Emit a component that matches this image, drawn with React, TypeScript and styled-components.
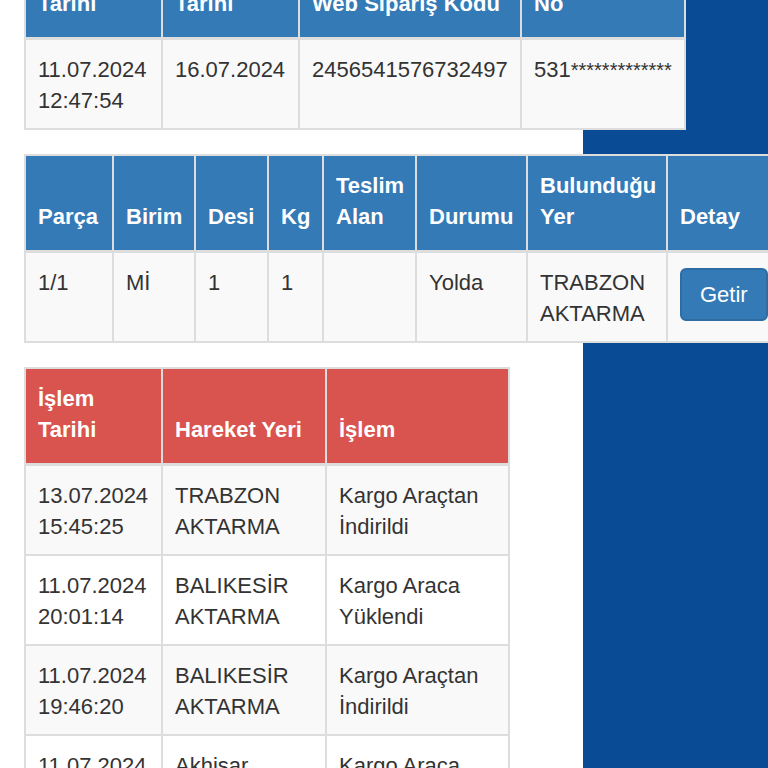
import React from "react";
import styled, { createGlobalStyle } from "styled-components";

const Global = createGlobalStyle`
  html, body {
    margin: 0;
    padding: 0;
    height: 100%;
    overflow: hidden;
  }
  body {
    background: linear-gradient(to right, #ffffff 0, #ffffff 583px, #0a4b96 583px, #0a4b96 100%);
    font-family: "Liberation Sans", Arial, Helvetica, sans-serif;
    color: #333;
  }
`;

const Page = styled.div`
  display: flex;
  flex-direction: column;
  align-items: flex-start;
  gap: 24px;
  padding-left: 24px;
  margin-top: -59px;
`;

const Table = styled.table<{ $width: number }>`
  width: ${(p) => p.$width}px;
  flex: none;
  table-layout: fixed;
  border-collapse: collapse;
  background: #fff;
  font-size: 22px;
  line-height: 31px;
  border: 2px solid #ddd;
`;

const Th = styled.th<{ $tone: "blue" | "red" }>`
  background: ${(p) => (p.$tone === "blue" ? "#337ab7" : "#d9534f")};
  color: #fff;
  font-weight: bold;
  text-align: left;
  vertical-align: bottom;
  padding: 14px 12px 18px 12px;
  border: 2px solid #ddd;
  border-bottom-width: 3px;
  white-space: normal;
`;

const Row = styled.tr`
  &:nth-child(odd) td {
    background: #f9f9f9;
  }
`;

const Td = styled.td`
  vertical-align: top;
  text-align: left;
  padding: 14px 12px 12px 12px;
  border: 2px solid #ddd;
  color: #333;
`;

const Stars = styled.span`
  font-size: 20px;
`;

const Button = styled.button`
  font-family: inherit;
  font-size: 22px;
  line-height: 31px;
  color: #fff;
  background: #337ab7;
  border: 2px solid #2e6da4;
  border-radius: 6px;
  padding: 9px 18px;
  margin-top: 1px;
  white-space: nowrap;
  cursor: pointer;
`;

type Col = { label: string; width: number };

const Head: React.FC<{ cols: Col[]; tone: "blue" | "red" }> = ({ cols, tone }) => (
  <>
    <colgroup>
      {cols.map((c, i) => (
        <col key={i} style={{ width: c.width }} />
      ))}
    </colgroup>
    <thead>
      <tr>
        {cols.map((c, i) => (
          <Th key={i} $tone={tone}>
            {c.label}
          </Th>
        ))}
      </tr>
    </thead>
  </>
);

const orderCols: Col[] = [
  { label: "Gönderim Tarihi", width: 137 },
  { label: "Teslim Tarihi", width: 137 },
  { label: "Web Sipariş Kodu", width: 222 },
  { label: "Alıcı Telefon No", width: 164 },
];

const pieceCols: Col[] = [
  { label: "Parça", width: 88 },
  { label: "Birim", width: 82 },
  { label: "Desi", width: 73 },
  { label: "Kg", width: 55 },
  { label: "Teslim Alan", width: 93 },
  { label: "Durumu", width: 111 },
  { label: "Bulunduğu Yer", width: 140 },
  { label: "Detay", width: 116 },
];

const moveCols: Col[] = [
  { label: "İşlem Tarihi", width: 137 },
  { label: "Hareket Yeri", width: 164 },
  { label: "İşlem", width: 183 },
];

const moves = [
  ["13.07.2024 15:45:25", "TRABZON AKTARMA", "Kargo Araçtan İndirildi"],
  ["11.07.2024 20:01:14", "BALIKESİR AKTARMA", "Kargo Araca Yüklendi"],
  ["11.07.2024 19:46:20", "BALIKESİR AKTARMA", "Kargo Araçtan İndirildi"],
  ["11.07.2024 18:10:32", "Akhisar Merkez", "Kargo Araca Yüklendi"],
  ["11.07.2024 12:47:54", "Akhisar Merkez", "Kargo Teslim Alındı"],
];

export default function App() {
  return (
    <>
      <Global />
      <Page>
        <Table $width={660}>
          <Head cols={orderCols} tone="blue" />
          <tbody>
            <Row>
              <Td>11.07.2024 12:47:54</Td>
              <Td>16.07.2024</Td>
              <Td>2456541576732497</Td>
              <Td>
                531<Stars>*************</Stars>
              </Td>
            </Row>
          </tbody>
        </Table>

        <Table $width={756}>
          <Head cols={pieceCols} tone="blue" />
          <tbody>
            <Row>
              <Td>1/1</Td>
              <Td>Mİ</Td>
              <Td>1</Td>
              <Td>1</Td>
              <Td></Td>
              <Td>Yolda</Td>
              <Td>TRABZON AKTARMA</Td>
              <Td>
                <Button type="button">Getir</Button>
              </Td>
            </Row>
          </tbody>
        </Table>

        <Table $width={484}>
          <Head cols={moveCols} tone="red" />
          <tbody>
            {moves.map((m, i) => (
              <Row key={i}>
                <Td>{m[0]}</Td>
                <Td>{m[1]}</Td>
                <Td>{m[2]}</Td>
              </Row>
            ))}
          </tbody>
        </Table>
      </Page>
    </>
  );
}
